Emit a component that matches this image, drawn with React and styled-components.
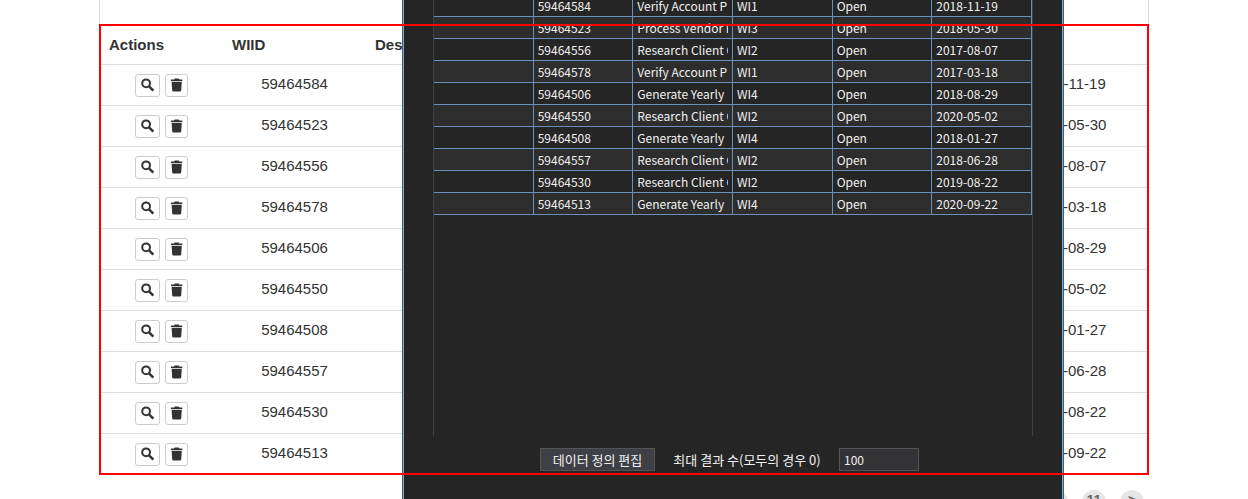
import React from "react";
import styled, { createGlobalStyle } from "styled-components";

const items = [
  ["59464584", "Verify Account P", "WI1", "Open", "2018-11-19"],
  ["59464523", "Process Vendor I", "WI3", "Open", "2018-05-30"],
  ["59464556", "Research Client C", "WI2", "Open", "2017-08-07"],
  ["59464578", "Verify Account P", "WI1", "Open", "2017-03-18"],
  ["59464506", "Generate Yearly", "WI4", "Open", "2018-08-29"],
  ["59464550", "Research Client C", "WI2", "Open", "2020-05-02"],
  ["59464508", "Generate Yearly", "WI4", "Open", "2018-01-27"],
  ["59464557", "Research Client C", "WI2", "Open", "2018-06-28"],
  ["59464530", "Research Client C", "WI2", "Open", "2019-08-22"],
  ["59464513", "Generate Yearly", "WI4", "Open", "2020-09-22"],
];

const GlobalStyle = createGlobalStyle`
  * { box-sizing: border-box; }
  body {
    margin: 0;
    background: #fff;
    color: #333;
    font-family: "Liberation Sans", Arial, sans-serif;
    font-size: 15px;
  }
`;

const Page = styled.main`
  position: relative;
  height: 100vh;
  overflow: hidden;
  padding: 0 99px;
`;

const Card = styled.section`
  position: relative;
  padding-top: 24px;
  border: solid #ddd;
  border-width: 0 1px;
`;

const Highlight = styled.div`
  position: absolute;
  inset: 24px -1px 0;
  z-index: 2;
  border: 2px solid #f00;
  pointer-events: none;
`;

const ItemTable = styled.table`
  width: 100%;
  table-layout: fixed;
  border-collapse: separate;
  border-spacing: 0;
`;

const Col = styled.col`
  width: ${(p) => p.$width};
`;

const HeadCell = styled.th`
  height: 41px;
  padding: 2px 9px 0;
  border-bottom: 1px solid #ddd;
  line-height: 20px;
  text-align: left;
`;

const ItemCell = styled.td`
  height: 41px;
  padding: 0 8px;
  border-bottom: 1px solid #ddd;
  line-height: 20px;
  text-align: center;
  white-space: nowrap;

  tr:last-child > & {
    border-bottom-color: transparent;
  }
`;

const TextCell = styled(ItemCell)`
  padding-bottom: 2px;
`;

const Actions = styled.div`
  display: flex;
  justify-content: center;
  gap: 5px;
`;

const IconButton = styled.button`
  display: flex;
  align-items: center;
  justify-content: center;
  width: ${(p) => p.$width};
  height: 23px;
  padding: 0 0 1px;
  border: 1px solid #ccc;
  border-radius: 3px;
  background: #fff;
  color: #333;
`;

const Pager = styled.nav`
  display: flex;
  justify-content: flex-end;
  gap: 14px;
  padding: 15px 5px 0;
`;

const PageButton = styled.button`
  width: 24px;
  height: 24px;
  padding: 0 0 4px;
  border: 0;
  border-radius: 50%;
  background: #e6e6e6;
  color: #666;
  font: bold 14px/20px "Liberation Sans", Arial, sans-serif;
`;

const Dialog = styled.section`
  position: absolute;
  top: -6px;
  bottom: -6px;
  left: 402px;
  z-index: 1;
  width: 662px;
  padding: 0 29px;
  border: 1px solid #1c6aa8;
  background: #252525;
  box-shadow: inset 0 0 0 1px #a0a0a0;
  color: #f1f1f1;
  font-family: "Noto Sans CJK KR", sans-serif;
  font-size: 12px;
`;

const GridFrame = styled.div`
  height: 441px;
  margin: 0 1px;
  border: solid #3f3f46;
  border-width: 0 1px;
`;

const Grid = styled.table`
  width: 100%;
  table-layout: fixed;
  border-collapse: separate;
  border-spacing: 0;
`;

const GridRow = styled.tr`
  background: #252525;

  &:nth-child(even) {
    background: #2d2d2d;
  }
`;

const GridCell = styled.td`
  height: 22px;
  padding: 0 4px;
  border: solid #6a8fb8;
  border-width: 0 1px 1px 0;
`;

const Clip = styled.div`
  overflow: hidden;
  line-height: 20px;
  white-space: nowrap;
`;

const Footer = styled.div`
  display: flex;
  align-items: center;
  justify-content: space-between;
  margin: 0 115px 0 108px;
  padding-top: 12px;
`;

const EditButton = styled.button`
  width: 115px;
  height: 23px;
  padding: 0;
  border: 1px solid #555;
  background: #3f3f46;
  color: inherit;
  font-family: inherit;
  font-size: 13px;
  line-height: 21px;
`;

const LimitLabel = styled.label`
  font-size: 13px;
  line-height: 22px;
`;

const LimitInput = styled.input`
  width: 80px;
  height: 23px;
  padding: 0 4px;
  border: 1px solid #555;
  background: #333337;
  color: inherit;
  font: inherit;
`;

function SearchIcon() {
  return (
    <svg width="13" height="14" viewBox="0 0 13 14" aria-hidden="true">
      <circle cx="5.1" cy="5.300" r="3.900" fill="none" stroke="currentColor" strokeWidth="2" />
      <path d="M8 8.300 12.300 12.600" stroke="currentColor" strokeWidth="2.4" />
    </svg>
  );
}

function TrashIcon() {
  return (
    <svg width="13" height="14" viewBox="0 0 13 14" aria-hidden="true">
      <path
        d="M4.700.6h4l.6.8h3v1.600H1V1.400h3.100zM1.600 3.800h10.200l-.6 8.600q-.1 1.100-1.200 1.100H3.400q-1.100 0-1.200-1.100z"
        fill="currentColor"
      />
    </svg>
  );
}

function ItemRow({ item }) {
  const id = item[0];
  const date = item[4];
  return (
    <tr>
      <ItemCell>
        <Actions>
          <IconButton type="button" $width="25px" aria-label={"View " + id}>
            <SearchIcon />
          </IconButton>
          <IconButton type="button" $width="23px" aria-label={"Delete " + id}>
            <TrashIcon />
          </IconButton>
        </Actions>
      </ItemCell>
      <TextCell>{id}</TextCell>
      <TextCell />
      <TextCell>{date}</TextCell>
    </tr>
  );
}

export default function App() {
  return (
    <>
      <GlobalStyle />
      <Page>
        <Card>
          <ItemTable>
            <colgroup>
              <Col $width="123px" />
              <Col $width="143px" />
              <Col $width="auto" />
              <Col $width="160px" />
            </colgroup>
            <thead>
              <tr>
                <HeadCell>Actions</HeadCell>
                <HeadCell>WIID</HeadCell>
                <HeadCell>Description</HeadCell>
                <HeadCell aria-label="Date" />
              </tr>
            </thead>
            <tbody>
              {items.map((item) => (
                <ItemRow key={item[0]} item={item} />
              ))}
            </tbody>
          </ItemTable>
          <Highlight />
        </Card>
        <Pager aria-label="Pages">
          <PageButton type="button" aria-label="Page 10" />
          <PageButton type="button">11</PageButton>
          <PageButton type="button" aria-label="Next page">&gt;</PageButton>
        </Pager>
        <Dialog>
          <GridFrame>
            <Grid>
              <tbody>
                {items.map((item) => (
                  <GridRow key={item[0]}>
                    <GridCell />
                    {item.map((value) => (
                      <GridCell key={value}>
                        <Clip>{value}</Clip>
                      </GridCell>
                    ))}
                  </GridRow>
                ))}
              </tbody>
            </Grid>
          </GridFrame>
          <Footer>
            <EditButton type="button">데이터 정의 편집</EditButton>
            <LimitLabel htmlFor="limit">최대 결과 수(모두의 경우 0)</LimitLabel>
            <LimitInput id="limit" type="text" defaultValue="100" />
          </Footer>
        </Dialog>
      </Page>
    </>
  );
}
